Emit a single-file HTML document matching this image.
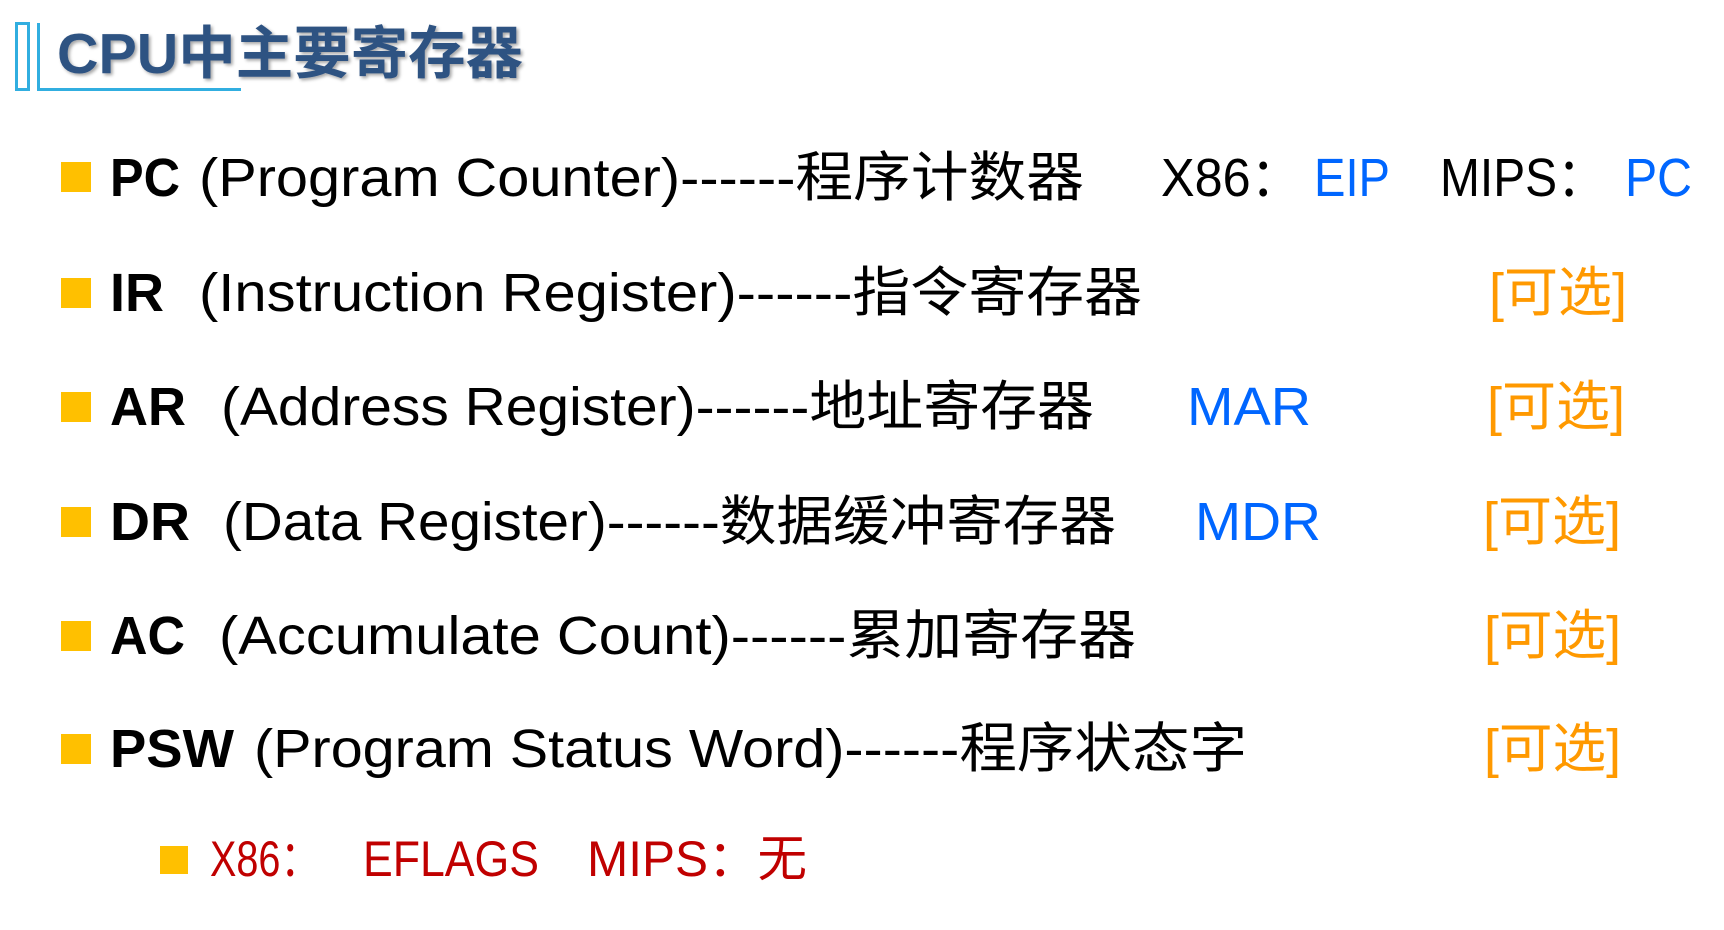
<!DOCTYPE html>
<html><head><meta charset="utf-8"><style>
html,body{margin:0;padding:0;background:#fff;width:1724px;height:930px;overflow:hidden}
svg{display:block}
text{font-family:"Liberation Sans","Noto Sans CJK SC",sans-serif}
</style></head><body>
<svg width="1724" height="930" viewBox="0 0 1724 930" xmlns="http://www.w3.org/2000/svg">
<defs><filter id="sh" x="-5%" y="-20%" width="110%" height="140%"><feDropShadow dx="2" dy="2" stdDeviation="1.5" flood-color="#000" flood-opacity="0.35"/></filter></defs>
<g fill="none" stroke="#31aee0" stroke-width="3">
<rect x="16.5" y="23.5" width="12" height="66"/>
<polyline points="38.5,23 38.5,89.5 241,89.5"/>
</g>
<text x="57" y="73" font-size="57" font-weight="bold" fill="#2f5282" filter="url(#sh)" textLength="466" lengthAdjust="spacingAndGlyphs">CPU中主要寄存器</text>

<g fill="#ffc000">
<rect x="61" y="162" width="30" height="30"/>
<rect x="61" y="278" width="30" height="30"/>
<rect x="61" y="392" width="30" height="30"/>
<rect x="61" y="507" width="30" height="30"/>
<rect x="61" y="621" width="30" height="30"/>
<rect x="61" y="734" width="30" height="30"/>
<rect x="160" y="846" width="28" height="28"/>
</g>

<g font-size="54" fill="#000">
<text x="110" y="196" font-weight="bold" textLength="70" lengthAdjust="spacingAndGlyphs">PC</text>
<text x="199" y="196" textLength="885" lengthAdjust="spacingAndGlyphs">(Program Counter)------程序计数器</text>
<text x="1161" y="196" textLength="140" lengthAdjust="spacingAndGlyphs">X86：</text>
<text x="1314" y="196" fill="#0066ff" textLength="76" lengthAdjust="spacingAndGlyphs">EIP</text>
<text x="1440" y="196" textLength="165" lengthAdjust="spacingAndGlyphs">MIPS：</text>
<text x="1625" y="196" fill="#0066ff" textLength="67" lengthAdjust="spacingAndGlyphs">PC</text>

<text x="110" y="311" font-weight="bold" textLength="54" lengthAdjust="spacingAndGlyphs">IR</text>
<text x="199" y="311" textLength="943" lengthAdjust="spacingAndGlyphs">(Instruction Register)------指令寄存器</text>
<text x="1489" y="311" fill="#ff9900" textLength="138" lengthAdjust="spacingAndGlyphs">[可选]</text>

<text x="110" y="425" font-weight="bold" textLength="76" lengthAdjust="spacingAndGlyphs">AR</text>
<text x="221" y="425" textLength="873" lengthAdjust="spacingAndGlyphs">(Address Register)------地址寄存器</text>
<text x="1187" y="425" fill="#0066ff" textLength="124" lengthAdjust="spacingAndGlyphs">MAR</text>
<text x="1487" y="425" fill="#ff9900" textLength="138" lengthAdjust="spacingAndGlyphs">[可选]</text>

<text x="110" y="540" font-weight="bold" textLength="80" lengthAdjust="spacingAndGlyphs">DR</text>
<text x="223" y="540" textLength="893" lengthAdjust="spacingAndGlyphs">(Data Register)------数据缓冲寄存器</text>
<text x="1195" y="540" fill="#0066ff" textLength="126" lengthAdjust="spacingAndGlyphs">MDR</text>
<text x="1483" y="540" fill="#ff9900" textLength="138" lengthAdjust="spacingAndGlyphs">[可选]</text>

<text x="110" y="654" font-weight="bold" textLength="75" lengthAdjust="spacingAndGlyphs">AC</text>
<text x="219" y="654" textLength="917" lengthAdjust="spacingAndGlyphs">(Accumulate Count)------累加寄存器</text>
<text x="1484" y="654" fill="#ff9900" textLength="137" lengthAdjust="spacingAndGlyphs">[可选]</text>

<text x="110" y="767" font-weight="bold" textLength="124" lengthAdjust="spacingAndGlyphs">PSW</text>
<text x="254" y="767" textLength="993" lengthAdjust="spacingAndGlyphs">(Program Status Word)------程序状态字</text>
<text x="1484" y="767" fill="#ff9900" textLength="137" lengthAdjust="spacingAndGlyphs">[可选]</text>
</g>
<g font-size="50" fill="#c00000">
<text x="210" y="876" textLength="110" lengthAdjust="spacingAndGlyphs">X86：</text>
<text x="363" y="876" textLength="176" lengthAdjust="spacingAndGlyphs">EFLAGS</text>
<text x="587" y="876" textLength="220" lengthAdjust="spacingAndGlyphs">MIPS：无</text>
</g>
</svg>
</body></html>
